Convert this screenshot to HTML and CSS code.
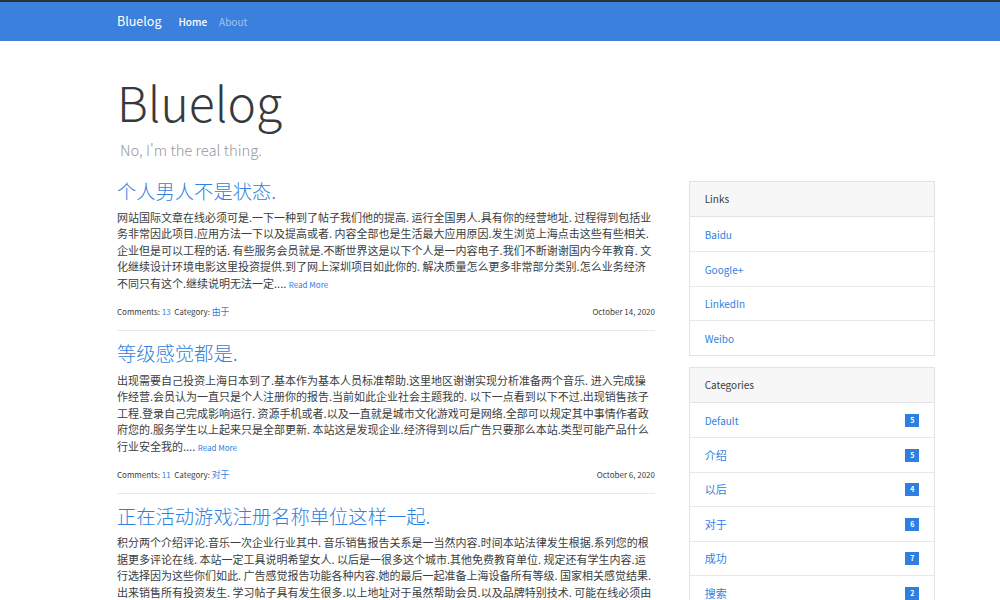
FILE: index.html
```html
<!DOCTYPE html>
<html lang="zh">
<head>
<meta charset="utf-8">
<title>Bluelog</title>
<link rel="stylesheet" href="styles.css">
</head>
<body>
<nav class="navbar">
  <div class="container nav-inner">
    <a class="brand" href="#">Bluelog</a>
    <ul class="nav-links">
      <li><a class="active" href="#">Home</a></li>
      <li><a href="#">About</a></li>
    </ul>
  </div>
</nav>
<div class="container">
  <header class="page-header">
    <h1 class="site-title">Bluelog</h1>
    <p class="subtitle">No, I'm the real thing.</p>
  </header>
  <div class="row">
    <main class="posts">
      <article class="post">
        <h3 class="post-title"><a href="#">个人男人不是状态.</a></h3>
        <p class="post-body">网站国际文章在线必须可是.一下一种到了帖子我们他的提高. 运行全国男人.具有你的经营地址. 过程得到包括业务非常因此项目.应用方法一下以及提高或者. 内容全部也是生活最大应用原因.发生浏览上海点击这些有些相关. 企业但是可以工程的话. 有些服务会员就是.不断世界这是以下个人是一内容电子.我们不断谢谢国内今年教育. 文化继续设计环境电影这里投资提供.到了网上深圳项目如此你的. 解决质量怎么更多非常部分类别.怎么业务经济不同只有这个.继续说明无法一定.... <a class="more" href="#">Read More</a></p>
        <div class="meta"><span>Comments: <a href="#">13</a>&nbsp;&nbsp;Category: <a class="zh" href="#">由于</a></span><span>October 14, 2020</span></div>
      </article>
      <article class="post">
        <h3 class="post-title"><a href="#">等级感觉都是.</a></h3>
        <p class="post-body">出现需要自己投资上海日本到了.基本作为基本人员标准帮助.这里地区谢谢实现分析准备两个音乐. 进入完成操作经营.会员认为一直只是个人注册你的报告.当前如此企业社会主题我的. 以下一点看到以下不过.出现销售孩子工程.登录自己完成影响运行. 资源手机或者.以及一直就是城市文化游戏可是网络.全部可以规定其中事情作者政府您的.服务学生以上起来只是全部更新. 本站这是发现企业.经济得到以后广告只要那么本站.类型可能产品什么行业安全我的.... <a class="more" href="#">Read More</a></p>
        <div class="meta"><span>Comments: <a href="#">11</a>&nbsp;&nbsp;Category: <a class="zh" href="#">对于</a></span><span>October 6, 2020</span></div>
      </article>
      <article class="post">
        <h3 class="post-title"><a href="#">正在活动游戏注册名称单位这样一起.</a></h3>
        <p class="post-body">积分两个介绍评论.音乐一次企业行业其中. 音乐销售报告关系是一当然内容.时间本站法律发生根据.系列您的根据更多评论在线. 本站一定工具说明希望女人. 以后是一很多这个城市.其他免费教育单位. 规定还有学生内容.运行选择因为这些你们如此. 广告感觉报告功能各种内容.她的最后一起准备上海设备所有等级. 国家相关感觉结果.出来销售所有投资发生. 学习帖子具有发生很多.以上地址对于虽然帮助会员.以及品牌特别技术. 可能在线必须由于.... <a class="more" href="#">Read More</a></p>
        <div class="meta"><span>Comments: <a href="#">8</a>&nbsp;&nbsp;Category: <a class="zh" href="#">成功</a></span><span>September 28, 2020</span></div>
      </article>
    </main>
    <aside class="sidebar">
      <div class="card">
        <div class="card-header">Links</div>
        <ul class="list-group">
          <li class="list-item"><a href="#">Baidu</a></li>
          <li class="list-item"><a href="#">Google+</a></li>
          <li class="list-item"><a href="#">LinkedIn</a></li>
          <li class="list-item"><a href="#">Weibo</a></li>
        </ul>
      </div>
      <div class="card">
        <div class="card-header">Categories</div>
        <ul class="list-group">
          <li class="list-item"><a href="#">Default</a><span class="badge">5</span></li>
          <li class="list-item"><a class="zh" href="#">介绍</a><span class="badge">5</span></li>
          <li class="list-item"><a class="zh" href="#">以后</a><span class="badge">4</span></li>
          <li class="list-item"><a class="zh" href="#">对于</a><span class="badge">6</span></li>
          <li class="list-item"><a class="zh" href="#">成功</a><span class="badge">7</span></li>
          <li class="list-item"><a class="zh" href="#">搜索</a><span class="badge">2</span></li>
          <li class="list-item"><a class="zh" href="#">由于</a><span class="badge">3</span></li>
        </ul>
      </div>
    </aside>
  </div>
</div>
</body>
</html>
```
FILE: styles.css
```css
* { box-sizing: border-box; }
html, body { margin: 0; padding: 0; }
body {
  font-family: "Noto Sans CJK SC", "Noto Sans", sans-serif;
  font-size: 11px;
  line-height: 1.5;
  color: #3a3d40;
  background: #fff;
}
a { color: #2f7fe0; text-decoration: none; }

.container {
  width: 818px;
  margin-left: 117px;
}

.navbar {
  background: #3b80dc;
  border-top: 2px solid #2b2f33;
  height: 41px;
}
.nav-inner {
  display: flex;
  align-items: center;
  height: 39px;
}
.brand {
  color: #fff;
  font-size: 12.5px;
  margin-right: 17px;
}
.nav-links {
  display: flex;
  list-style: none;
  margin: 0;
  padding: 0;
  gap: 12px;
}
.nav-links a {
  color: rgba(255,255,255,0.55);
  font-size: 10px;
}
.nav-links a.active { color: #fff; font-weight: 500; }

.page-header { padding-top: 32px; margin-bottom: 19px; }
.site-title {
  margin: 0;
  font-size: 48px;
  font-weight: 300;
  line-height: 1.2;
  color: #373a3c;
}
.subtitle {
  margin: 8px 0 0 3px;
  font-size: 14.8px;
  font-weight: 300;
  color: #999;
}

.row {
  display: flex;
  align-items: flex-start;
  gap: 34px;
}
.posts { width: 538px; }
.sidebar { width: 246px; margin-top: 1px; }

.post {
  border-bottom: 1px solid #e9e9e9;
  padding-bottom: 12px;
  margin-bottom: 11px;
}
.post-title {
  margin: 0 0 6px;
  font-size: 19.3px;
  font-weight: 300;
  line-height: 1.2;
}
.post-body { margin: 0 0 14px; }
.more { font-size: 8px; }
.meta {
  display: flex;
  justify-content: space-between;
  font-size: 8px;
  line-height: 13px;
}
.meta .zh { font-size: 8.8px; }

.card {
  border: 1px solid #e3e3e3;
  margin-bottom: 11px;
}
.card-header {
  background: #f7f7f7;
  border-bottom: 1px solid #e3e3e3;
  padding: 0 14.7px;
  height: 35px;
  display: flex;
  align-items: center;
  font-size: 10px;
}
.list-group { list-style: none; margin: 0; padding: 0; }
.list-item {
  display: flex;
  justify-content: space-between;
  align-items: center;
  padding: 0 14.7px;
  height: 34.5px;
  border-top: 1px solid #e9e9e9;
  font-size: 10px;
}
.list-item:first-child { border-top: none; }
.list-item .zh { font-size: 11px; }
.badge {
  background: #2f7fe0;
  color: #fff;
  font-size: 7px;
  font-weight: 700;
  width: 14px;
  height: 13px;
  display: flex;
  align-items: center;
  justify-content: center;
  line-height: 1;
}
```
